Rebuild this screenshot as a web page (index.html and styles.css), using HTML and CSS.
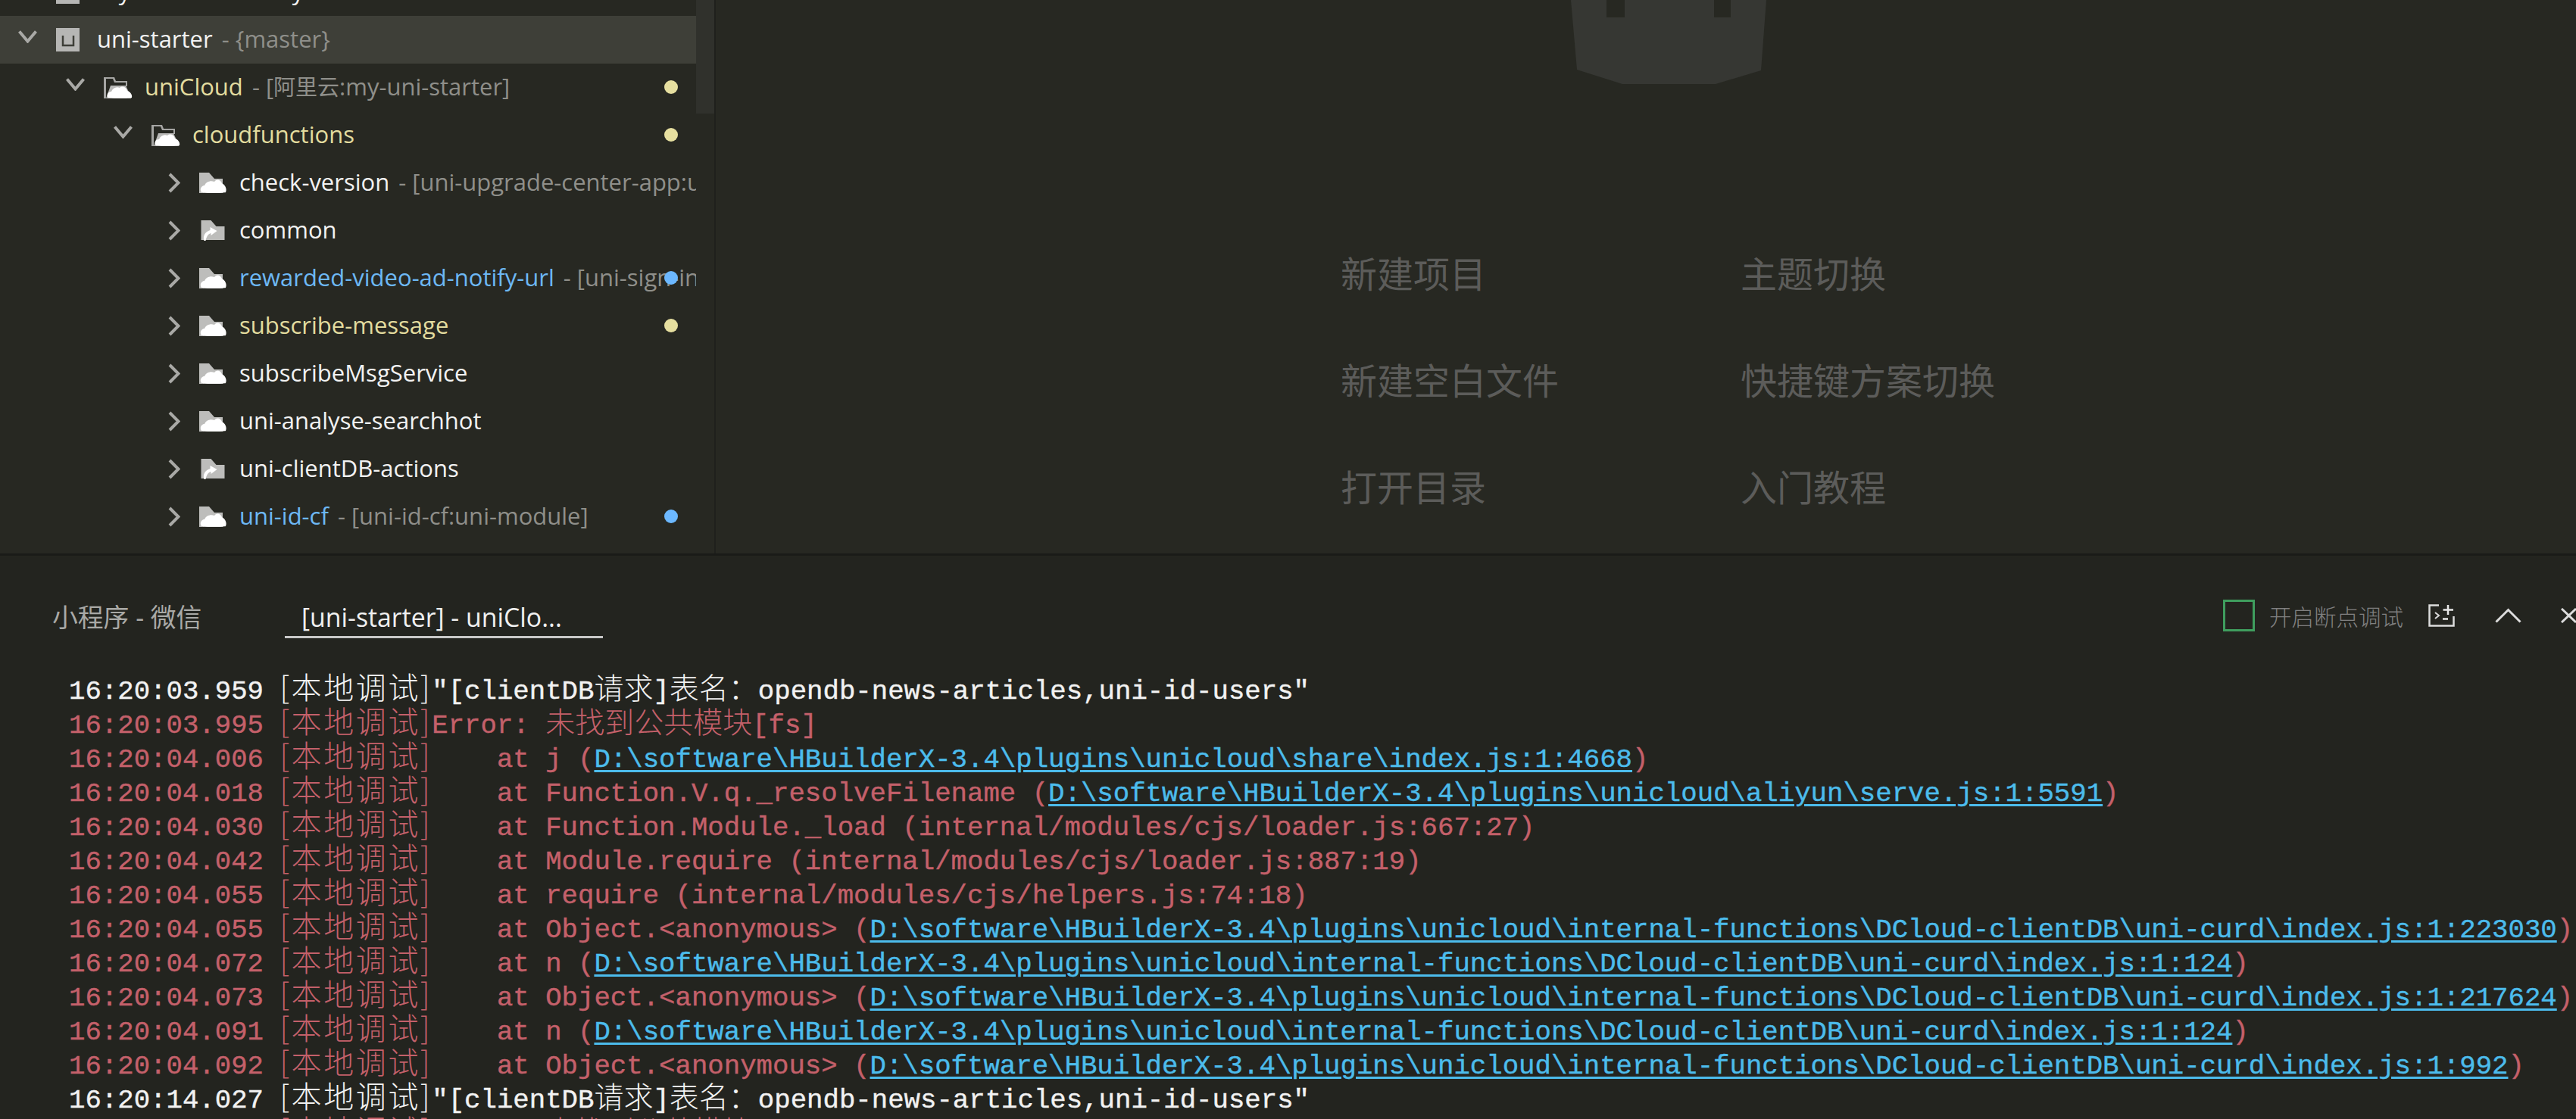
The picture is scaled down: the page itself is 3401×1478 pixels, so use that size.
FILE: index.html
```html
<!DOCTYPE html>
<html lang="zh-CN">
<head>
<meta charset="utf-8">
<title>HBuilderX</title>
<link rel="stylesheet" href="styles.css">
</head>
<body>
<svg class="defs" aria-hidden="true">
  <symbol id="chev-d" viewBox="0 0 25 17"><path d="M1.5 1.5 12.5 14.5 23.5 1.5" fill="none" stroke="#a9a9a6" stroke-width="4"/></symbol>
  <symbol id="chev-r" viewBox="0 0 16 27"><path d="M2 2 13.5 13.5 2 25" fill="none" stroke="#a9a9a6" stroke-width="4"/></symbol>
  <symbol id="f-open" viewBox="0 0 38 28">
    <path d="M0 0H14L16 5H31V12H29V7H14L12 2H3V28H0Z" fill="#a5a5a3"/>
    <path d="M3 28 9 11H29L36 26V28Z" fill="#b9b9b7"/>
    <path d="M6 27C3 24 5 19 10 19 12 14 17 12 21 14 24 11 30 13 31 18 35 19 38 23 37 27 35 28 8 28 6 27Z" fill="#fff"/>
  </symbol>
  <symbol id="f-closed" viewBox="0 0 36 27">
    <path d="M0 0H13L20 8H31V27H0Z" fill="#bdbdbb"/>
    <path d="M3 26C0 22 3 17 7 17 9 12 15 10 20 12 23 8 28 9 30 14 34 16 37 21 35 26 33 27 6 27 3 26Z" fill="#fff"/>
  </symbol>
  <symbol id="f-link" viewBox="0 0 31 27">
    <path d="M0 0H13L20 8H31V26H0Z" fill="#bdbdbb"/>
    <path d="M4 27C2 21 5 15 12 13V9L21 14 13 20V17C9 18 7 22 6 27Z" fill="#fff"/>
  </symbol>
  <symbol id="f-proj" viewBox="0 0 31 31">
    <rect width="31" height="31" fill="#b6b6b4"/>
    <path d="M9 10V23H23V10" fill="none" stroke="#3e3f38" stroke-width="2.5"/>
  </symbol>
</svg>

<div class="main">
  <aside class="sidebar">
    <div class="thumb"></div>
    <ul class="tree">
      <li class="row lv0"><svg class="chev-d"><use href="#chev-d"/></svg><svg class="ic-proj"><use href="#f-proj"/></svg><span class="name">my-uniCloud-study</span></li>
      <li class="row lv0 sel"><svg class="chev-d"><use href="#chev-d"/></svg><svg class="ic-proj"><use href="#f-proj"/></svg><span class="name">uni-starter</span><span class="meta"> - {master}</span></li>
      <li class="row lv1"><svg class="chev-d"><use href="#chev-d"/></svg><svg class="ic-open"><use href="#f-open"/></svg><span class="name mod">uniCloud</span><span class="meta"> - [<span class="meta-cjk">阿里云</span>:my-uni-starter]</span><i class="dot yellow"></i></li>
      <li class="row lv2"><svg class="chev-d"><use href="#chev-d"/></svg><svg class="ic-open"><use href="#f-open"/></svg><span class="name mod">cloudfunctions</span><i class="dot yellow"></i></li>
      <li class="row lv3"><svg class="chev-r"><use href="#chev-r"/></svg><svg class="ic-closed"><use href="#f-closed"/></svg><span class="name">check-version</span><span class="meta"> - [uni-upgrade-center-app:uni-module]</span></li>
      <li class="row lv3"><svg class="chev-r"><use href="#chev-r"/></svg><svg class="ic-closed"><use href="#f-link"/></svg><span class="name">common</span></li>
      <li class="row lv3"><svg class="chev-r"><use href="#chev-r"/></svg><svg class="ic-closed"><use href="#f-closed"/></svg><span class="name new">rewarded-video-ad-notify-url</span><span class="meta"> - [uni-sign-in:uni-module]</span><i class="dot blue"></i></li>
      <li class="row lv3"><svg class="chev-r"><use href="#chev-r"/></svg><svg class="ic-closed"><use href="#f-closed"/></svg><span class="name mod">subscribe-message</span><i class="dot yellow"></i></li>
      <li class="row lv3"><svg class="chev-r"><use href="#chev-r"/></svg><svg class="ic-closed"><use href="#f-closed"/></svg><span class="name">subscribeMsgService</span></li>
      <li class="row lv3"><svg class="chev-r"><use href="#chev-r"/></svg><svg class="ic-closed"><use href="#f-closed"/></svg><span class="name">uni-analyse-searchhot</span></li>
      <li class="row lv3"><svg class="chev-r"><use href="#chev-r"/></svg><svg class="ic-closed"><use href="#f-link"/></svg><span class="name">uni-clientDB-actions</span></li>
      <li class="row lv3"><svg class="chev-r"><use href="#chev-r"/></svg><svg class="ic-closed"><use href="#f-closed"/></svg><span class="name new">uni-id-cf</span><span class="meta"> - [uni-id-cf:uni-module]</span><i class="dot blue"></i></li>
    </ul>
  </aside>
  <section class="editor">
    <svg class="logo" viewBox="0 0 258 111"><path fill-rule="evenodd" d="M0 0H47V23H71V0H189V23H211V0H258L251 93 191 111H68L8 92Z" fill="#363733"/></svg>
    <div class="welcome">
      <span>新建项目</span><span>主题切换</span>
      <span>新建空白文件</span><span>快捷键方案切换</span>
      <span>打开目录</span><span>入门教程</span>
    </div>
  </section>
</div>

<section class="panel">
  <header class="toolbar">
    <span class="tab first">小程序 - 微信</span>
    <span class="tab active">[uni-starter] - uniClo...</span>
    <span class="tools">
      <i class="check"></i>
      <span class="check-label">开启断点调试</span>
      <svg class="ic-term" viewBox="0 0 35 30"><path d="M14 1.5H1.5V28.5H33.5V16" fill="none" stroke="#dcdcdc" stroke-width="2.5"/><path d="M9 11 14 15 9 19" fill="none" stroke="#dcdcdc" stroke-width="2"/><path d="M19 19.5H26M26 1V14M19.500 7.500H33" fill="none" stroke="#e8e8e8" stroke-width="2.500"/></svg>
      <svg class="ic-up" viewBox="0 0 35 20"><path d="M1.500 18.500 17.500 2.500 33.500 18.500" fill="none" stroke="#dcdcdc" stroke-width="3"/></svg>
      <svg class="ic-x" viewBox="0 0 21 20"><path d="M1 1 20 19M20 1 1 19" fill="none" stroke="#dcdcdc" stroke-width="3"/></svg>
    </span>
  </header>
  <div class="log">
    <div class="line info">16:20:03.959 <span class="tag">[本地调试]</span>"[clientDB<span class="cjk">请求</span>]<span class="cjk">表名：</span>opendb-news-articles,uni-id-users"</div>
    <div class="line err">16:20:03.995 <span class="tag">[本地调试]</span>Error: <span class="cjk">未找到公共模块</span>[fs]</div>
    <div class="line err">16:20:04.006 <span class="tag">[本地调试]</span>    at j (<a class="link">D:\software\HBuilderX-3.4\plugins\unicloud\share\index.js:1:4668</a>)</div>
    <div class="line err">16:20:04.018 <span class="tag">[本地调试]</span>    at Function.V.q._resolveFilename (<a class="link">D:\software\HBuilderX-3.4\plugins\unicloud\aliyun\serve.js:1:5591</a>)</div>
    <div class="line err">16:20:04.030 <span class="tag">[本地调试]</span>    at Function.Module._load (internal/modules/cjs/loader.js:667:27)</div>
    <div class="line err">16:20:04.042 <span class="tag">[本地调试]</span>    at Module.require (internal/modules/cjs/loader.js:887:19)</div>
    <div class="line err">16:20:04.055 <span class="tag">[本地调试]</span>    at require (internal/modules/cjs/helpers.js:74:18)</div>
    <div class="line err">16:20:04.055 <span class="tag">[本地调试]</span>    at Object.&lt;anonymous&gt; (<a class="link">D:\software\HBuilderX-3.4\plugins\unicloud\internal-functions\DCloud-clientDB\uni-curd\index.js:1:223030</a>)</div>
    <div class="line err">16:20:04.072 <span class="tag">[本地调试]</span>    at n (<a class="link">D:\software\HBuilderX-3.4\plugins\unicloud\internal-functions\DCloud-clientDB\uni-curd\index.js:1:124</a>)</div>
    <div class="line err">16:20:04.073 <span class="tag">[本地调试]</span>    at Object.&lt;anonymous&gt; (<a class="link">D:\software\HBuilderX-3.4\plugins\unicloud\internal-functions\DCloud-clientDB\uni-curd\index.js:1:217624</a>)</div>
    <div class="line err">16:20:04.091 <span class="tag">[本地调试]</span>    at n (<a class="link">D:\software\HBuilderX-3.4\plugins\unicloud\internal-functions\DCloud-clientDB\uni-curd\index.js:1:124</a>)</div>
    <div class="line err">16:20:04.092 <span class="tag">[本地调试]</span>    at Object.&lt;anonymous&gt; (<a class="link">D:\software\HBuilderX-3.4\plugins\unicloud\internal-functions\DCloud-clientDB\uni-curd\index.js:1:992</a>)</div>
    <div class="line info">16:20:14.027 <span class="tag">[本地调试]</span>"[clientDB<span class="cjk">请求</span>]<span class="cjk">表名：</span>opendb-news-articles,uni-id-users"</div>
    <div class="line err">16:20:14.058 <span class="tag">[本地调试]</span>Error: <span class="cjk">未找到公共模块</span>[fs]</div>
  </div>
</section>
</body>
</html>
```
FILE: styles.css
```css
* { box-sizing: border-box; }
html, body { height: 100%; }
body {
  margin: 0;
  overflow: hidden;
  background: #23241f;
  color: #f0f0f0;
  font-family: "Open Sans", "Noto Sans CJK SC", sans-serif;
  display: flex;
  flex-direction: column;
}
.defs { display: none; }

.main { display: flex; height: 731px; flex: none; overflow: hidden; background: #272822; }

.sidebar {
  position: relative;
  width: 945px;
  flex: none;
  border-right: 2px solid #1f201c;
  overflow: hidden;
}
.thumb { position: absolute; left: 919px; top: 0; width: 24px; height: 150px; background: #30312c; }
.tree { list-style: none; margin: -42px 0 0; padding: 0; width: 919px; }
.row {
  position: relative;
  height: 63px;
  display: flex;
  align-items: center;
  white-space: nowrap;
  overflow: hidden;
  font-size: 31px;
}
.row.sel { background: #3e3f38; }
.lv0 { padding-left: 24px; }
.lv1 { padding-left: 87px; }
.lv2 { padding-left: 150px; }
.lv3 { padding-left: 222px; }

.chev-d { width: 25px; height: 17px; flex: none; margin-right: 25px; margin-top: -8px; }
.chev-r { width: 16px; height: 27px; flex: none; margin-right: 25px; }
.ic-proj { width: 31px; height: 31px; flex: none; margin-right: 23px; }
.ic-open { width: 38px; height: 28px; flex: none; margin-right: 16px; }
.ic-closed { width: 36px; height: 27px; flex: none; margin-right: 17px; }

.name { color: #f2f2f2; flex: none; margin-bottom: 4px; }
.name.mod { color: #e3dc9f; }
.name.new { color: #6db8f5; }
.meta { color: #8f8f8a; flex: none; white-space: pre; margin-left: 4px; margin-bottom: 4px; }
.meta-cjk { font-size: 29px; }

.dot {
  position: absolute;
  left: 877px;
  top: 22px;
  width: 18px;
  height: 18px;
  border-radius: 50%;
}
.dot.yellow { background: #e6dfa0; }
.dot.blue { background: #6cb8ff; }

.editor { flex: 1; min-width: 0; }
.logo { display: block; width: 258px; height: 111px; margin-left: 1129px; }
.welcome {
  display: grid;
  grid-template-columns: 528px auto;
  grid-auto-rows: 141px;
  margin: 178px 0 0 825px;
  font-size: 48px;
  line-height: 141px;
  color: #5c5c5a;
  font-family: "Noto Sans CJK SC", sans-serif;
}

.panel { flex: 1; min-height: 0; border-top: 3px solid #1a1b18; overflow: hidden; }
.toolbar { height: 150px; display: flex; align-items: flex-start; padding-left: 69px; position: relative; }
.tab {
  margin-top: 56px;
  height: 50px;
  font-size: 33.8px;
  line-height: 50px;
  color: #a9a9a6;
  white-space: nowrap;
}
.tab.first { width: 307px; }
.tab.active {
  width: 420px;
  height: 53px;
  padding-left: 22px;
  color: #f0f0f0;
  border-bottom: 3px solid #c8c8c8;
}
.tools {
  position: absolute;
  left: 2935px;
  top: 58px;
  height: 42px;
  display: flex;
  align-items: center;
}
.check { width: 42px; height: 42px; border: 3px solid #3f9e5e; flex: none; margin-right: 19px; }
.check-label { font-size: 29.5px; color: #808080; font-weight: 300; font-family: "Noto Sans CJK SC", sans-serif; margin-right: 33px; flex: none; }
.ic-term { width: 35px; height: 30px; flex: none; margin-right: 53px; }
.ic-up { width: 35px; height: 20px; flex: none; margin-right: 52px; }
.ic-x { width: 21px; height: 20px; flex: none; }

.log {
  padding-left: 91px;
  font-family: "Liberation Mono", "Noto Sans CJK SC", monospace;
  font-size: 35.7px;
  line-height: 45px;
}
.line { height: 45px; white-space: pre; -webkit-text-stroke: 0.4px currentColor; }
.info { color: #f2f2f2; }
.err { color: #c4606a; }
.tag {
  font-family: "Noto Sans CJK SC", sans-serif;
  font-size: 40px;
  font-weight: 300;
  letter-spacing: 2.6px;
  line-height: 45px;
  -webkit-text-stroke: 0;
}
.cjk { font-family: "Noto Sans CJK SC", sans-serif; font-size: 39px; font-weight: 300; line-height: 45px; -webkit-text-stroke: 0; }
.link { color: #4cbcec; text-decoration: underline; text-decoration-thickness: 3px; text-underline-offset: 4px; }
```
